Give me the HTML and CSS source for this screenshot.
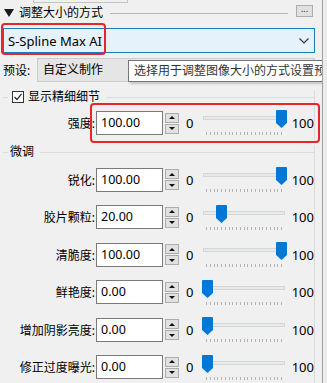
FILE: index.html
```html
<!DOCTYPE html>
<html lang="zh-CN">
<head>
<meta charset="utf-8">
<title>调整大小的方式</title>
<link rel="stylesheet" href="styles.css">
</head>
<body>
<div class="app">
  <div class="panel">
    <div class="stub"></div>
    <div class="head">
      <svg class="tri" width="10" height="8" viewBox="0 0 10 8"><polygon points="0,0 10,0 5,8" fill="#1a1a1a"/></svg>
      <span class="head-title">调整大小的方式</span>
      <span class="head-line"></span>
      <span class="dots">...</span>
    </div>
    <div class="combo">
      <span class="combo-text">S-Spline Max AI</span>
      <svg class="chev" width="10" height="6" viewBox="0 0 10 6"><polyline points="0.5,0.5 5,5 9.5,0.5" fill="none" stroke="#333" stroke-width="1.1"/></svg>
    </div>
    <div class="preset">
      <span class="preset-lbl">预设:</span>
      <span class="preset-box">自定义制作</span>
    </div>

    <div class="group g1">
      <div class="group-head">
        <span class="dash"></span>
        <span class="check"><svg width="10" height="10" viewBox="0 0 10 10"><polyline points="1.5,5 4,7.5 8.5,1.8" fill="none" stroke="#222" stroke-width="1.2"/></svg></span>
        <span class="group-title">显示精细细节</span>
        <span class="group-line"></span>
      </div>
      <div class="row r38">
        <span class="lbl">强度:</span>
        <span class="inp">100.00</span>
        <span class="spin"><span class="sb up"></span><span class="sb down"></span></span>
        <span class="zero">0</span>
        <span class="slider"><span class="track"></span><span class="ticks"></span><svg class="thumb" style="left:75.5px" width="11" height="18" viewBox="0 0 11 18"><path d="M0 1 Q0 0 1 0 H10 Q11 0 11 1 V13 L5.5 18 L0 13 Z" fill="#0078d7"/></svg></span>
        <span class="max">100</span>
      </div>
    </div>

    <div class="group g2">
      <div class="group-head">
        <span class="dash"></span>
        <span class="group-title t2">微调</span>
        <span class="group-line"></span>
      </div>
      <div class="row">
        <span class="lbl">锐化:</span>
        <span class="inp">100.00</span>
        <span class="spin"><span class="sb up"></span><span class="sb down"></span></span>
        <span class="zero">0</span>
        <span class="slider"><span class="track"></span><span class="ticks"></span><svg class="thumb" style="left:75.5px" width="11" height="18" viewBox="0 0 11 18"><path d="M0 1 Q0 0 1 0 H10 Q11 0 11 1 V13 L5.5 18 L0 13 Z" fill="#0078d7"/></svg></span>
        <span class="max">100</span>
      </div>
      <div class="row">
        <span class="lbl">胶片颗粒:</span>
        <span class="inp">20.00</span>
        <span class="spin"><span class="sb up"></span><span class="sb down"></span></span>
        <span class="zero">0</span>
        <span class="slider"><span class="track"></span><span class="ticks"></span><svg class="thumb" style="left:16.3px" width="11" height="18" viewBox="0 0 11 18"><path d="M0 1 Q0 0 1 0 H10 Q11 0 11 1 V13 L5.5 18 L0 13 Z" fill="#0078d7"/></svg></span>
        <span class="max">100</span>
      </div>
      <div class="row">
        <span class="lbl">清脆度:</span>
        <span class="inp">100.00</span>
        <span class="spin"><span class="sb up"></span><span class="sb down"></span></span>
        <span class="zero">0</span>
        <span class="slider"><span class="track"></span><span class="ticks"></span><svg class="thumb" style="left:75.5px" width="11" height="18" viewBox="0 0 11 18"><path d="M0 1 Q0 0 1 0 H10 Q11 0 11 1 V13 L5.5 18 L0 13 Z" fill="#0078d7"/></svg></span>
        <span class="max">100</span>
      </div>
      <div class="row">
        <span class="lbl">鲜艳度:</span>
        <span class="inp">0.00</span>
        <span class="spin"><span class="sb up"></span><span class="sb down"></span></span>
        <span class="zero">0</span>
        <span class="slider"><span class="track"></span><span class="ticks"></span><svg class="thumb" style="left:1.5px" width="11" height="18" viewBox="0 0 11 18"><path d="M0 1 Q0 0 1 0 H10 Q11 0 11 1 V13 L5.5 18 L0 13 Z" fill="#0078d7"/></svg></span>
        <span class="max">100</span>
      </div>
      <div class="row">
        <span class="lbl">增加阴影亮度:</span>
        <span class="inp">0.00</span>
        <span class="spin"><span class="sb up"></span><span class="sb down"></span></span>
        <span class="zero">0</span>
        <span class="slider"><span class="track"></span><span class="ticks"></span><svg class="thumb" style="left:1.5px" width="11" height="18" viewBox="0 0 11 18"><path d="M0 1 Q0 0 1 0 H10 Q11 0 11 1 V13 L5.5 18 L0 13 Z" fill="#0078d7"/></svg></span>
        <span class="max">100</span>
      </div>
      <div class="row">
        <span class="lbl">修正过度曝光:</span>
        <span class="inp">0.00</span>
        <span class="spin"><span class="sb up"></span><span class="sb down"></span></span>
        <span class="zero">0</span>
        <span class="slider"><span class="track"></span><span class="ticks"></span><svg class="thumb" style="left:1.5px" width="11" height="18" viewBox="0 0 11 18"><path d="M0 1 Q0 0 1 0 H10 Q11 0 11 1 V13 L5.5 18 L0 13 Z" fill="#0078d7"/></svg></span>
        <span class="max">100</span>
      </div>
    </div>

    <div class="tooltip">选择用于调整图像大小的方式设置预览</div>
    <div class="mark mark-combo"></div>
    <div class="mark mark-strength"></div>
  </div>
  <div class="edge"></div>
</div>
</body>
</html>
```

FILE: styles.css
```css
* { box-sizing: border-box; }
html, body { margin: 0; padding: 0; }
body {
  width: 327px;
  height: 383px;
  overflow: hidden;
  background: #f0f0f0;
  color: #000;
  font-family: "Noto Sans", "Noto Sans CJK SC", sans-serif;
  font-size: 12px;
}
.app { display: flex; height: 383px; }
.panel { width: 322px; position: relative; overflow: hidden; }
.edge { flex: 1; border-left: 1px solid #a0a0a0; background: #ececec; }

.stub {
  margin-left: 33px;
  width: 95px;
  height: 3px;
  border: 1px solid #c4c4c4;
  border-top: none;
}

.head {
  display: flex;
  align-items: center;
  height: 20px;
  padding-left: 4px;
  padding-right: 9px;
}
.tri { flex: none; margin-right: 5px; }
.head-title { white-space: nowrap; line-height: 20px; }
.head-line { flex: 1; border-top: 1px solid #b8b8b8; margin: 0 8px 0 7px; height: 0; }
.dots {
  align-self: flex-start;
  margin-top: 2px;
  width: 17px;
  height: 12px;
  background: #e1e1e1;
  border: 1px solid #adadad;
  font-size: 9px;
  line-height: 6px;
  text-align: center;
  color: #222;
}

.combo {
  margin: 5px 7px 0 3px;
  height: 25px;
  border: 1px solid #1c7bb8;
  background: #e5f1fb;
  display: flex;
  align-items: center;
  padding: 0 5px 0 4px;
}
.combo-text { flex: 1; font-size: 13px; white-space: nowrap; }
.chev { flex: none; }

.preset {
  margin-top: 5px;
  height: 24px;
  display: flex;
  align-items: center;
  padding-left: 3px;
  padding-right: 7px;
}
.preset-lbl { width: 34px; white-space: nowrap; }
.preset-box {
  flex: 1;
  height: 24px;
  line-height: 22px;
  background: #e5e5e5;
  border: 1px solid #cccccc;
  padding-left: 5px;
}

.group {
  margin: 0 7px 0 3px;
  border-right: 1px solid #dcdcdc;
}
.g1 { margin-top: 8px; }
.group-head {
  display: flex;
  align-items: center;
  height: 14px;
}
.g2 .group-head { margin-bottom: 2px; }
.dash { width: 5px; border-top: 1px solid #dcdcdc; height: 0; flex: none; }
.check {
  flex: none;
  width: 12px;
  height: 12px;
  margin-left: 4px;
  border: 1px solid #333;
  background: #fff;
  display: flex;
  align-items: center;
  justify-content: center;
}
.group-title { margin-left: 4px; white-space: nowrap; line-height: 14px; }
.t2 { margin-left: 2px; }
.group-line { flex: 1; border-top: 1px solid #dcdcdc; height: 0; margin-left: 6px; }

.row {
  display: flex;
  align-items: center;
  height: 37.5px;
}
.r38 { height: 38px; margin-bottom: 3px; }
.lbl {
  width: 93px;
  text-align: right;
  padding-right: 1px;
  white-space: nowrap;
}
.inp {
  width: 67px;
  height: 24px;
  background: #fff;
  border: 1px solid #7a7a7a;
  line-height: 22px;
  padding-left: 4px;
  font-size: 12.5px;
}
.spin {
  margin-left: 2px;
  width: 14px;
  display: flex;
  flex-direction: column;
  gap: 1px;
}
.sb {
  height: 10px;
  background: #e1e1e1;
  border: 1px solid #adadad;
  display: flex;
  align-items: center;
  justify-content: center;
}
.sb::after {
  content: "";
  width: 0;
  height: 0;
  border-left: 3px solid transparent;
  border-right: 3px solid transparent;
}
.up::after { border-bottom: 3px solid #111; }
.down::after { border-top: 3px solid #111; }
.zero { width: 21px; padding-left: 7px; font-size: 13px; }
.slider { position: relative; width: 88px; height: 37.5px; flex: none; }
.track {
  position: absolute;
  left: 3px;
  right: 3px;
  top: 12px;
  height: 4px;
  background: #e7eaea;
  border: 1px solid #d6d6d6;
}
.ticks {
  position: absolute;
  left: 6px;
  width: 76px;
  top: 28px;
  height: 3px;
  background: repeating-linear-gradient(to right, #b4b4b4 0 1px, transparent 1px 3.75px);
}
.thumb { position: absolute; top: 6px; }
.max { flex: 1; text-align: right; font-size: 13px; }

.tooltip {
  position: absolute;
  left: 128px;
  top: 60px;
  width: 230px;
  height: 22px;
  background: #fff;
  border: 1px solid #767676;
  padding-left: 5px;
  line-height: 20px;
  white-space: nowrap;
  color: #333;
  box-shadow: 2px 2px 2px rgba(0,0,0,0.18);
}

.mark {
  position: absolute;
  border: 2.5px solid #e5262b;
  border-radius: 4px;
}
.mark-combo { left: 1px; top: 23px; width: 105px; height: 32px; }
.mark-strength { left: 90px; top: 103px; width: 230px; height: 40px; }
```
